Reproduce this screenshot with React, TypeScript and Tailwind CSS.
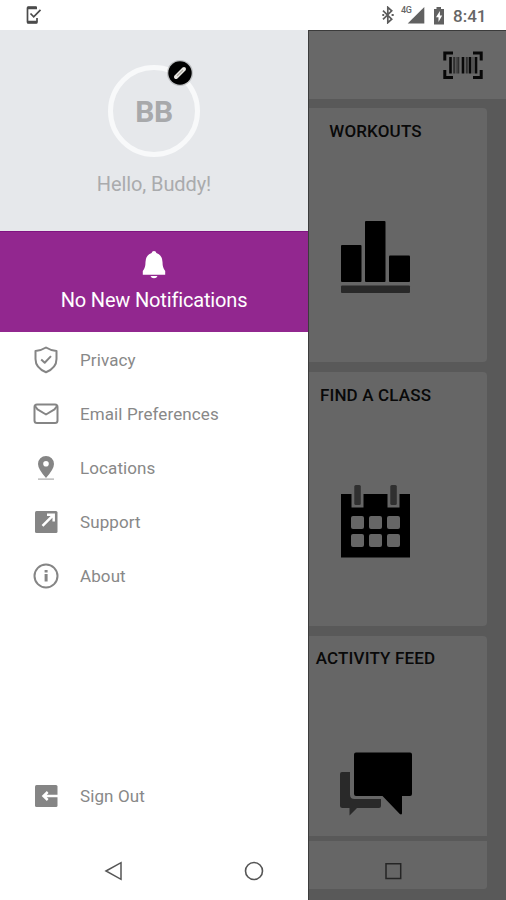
import type { ReactNode } from "react";

function StatusBar() {
  return (
    <header className="flex h-[30px] shrink-0 items-center bg-white text-[#666]">
      <svg className="ml-[25px]" width="18" height="20" viewBox="0 0 18 20" fill="none" stroke="#4b4b4b">
        <path d="M11.5 2H3.3Q2.5 2 2.5 3V17Q2.5 18 3.5 18H11Q12 18 12 17V13" strokeWidth="1.7" />
        <path d="M2.5 3H12M2.5 17H12" strokeWidth="2.5" />
        <path d="M5.5 8.5 8.7 11.8 15.5 4.8" strokeWidth="1.7" />
      </svg>
      <svg className="ml-auto" width="12" height="18" viewBox="0 0 12 18" fill="none" stroke="#5c5c5c" strokeWidth="1.7">
        <path d="M1 4.6 9.7 13.2 5.8 16.7V1.3L9.7 4.8 1 13.4" />
        <path d="M.3 9H2.2M9.6 9H11.7" strokeWidth="1.9" />
      </svg>
      <div className="ml-[7px] mt-px flex h-[17px] w-[24px] items-start">
        <span className="w-[12px] text-[9px] font-medium leading-[7px] tracking-[-0.3px]">4G</span>
        <svg className="-ml-[6px] shrink-0" width="18" height="17" viewBox="0 0 18 17">
          <path d="M.7 16.5 17.3 0V16.5Z" fill="#616161" />
        </svg>
      </div>
      <svg className="ml-[8px] mt-px" width="12" height="18" viewBox="0 0 12 18">
        <path d="M3.5 0H8V2H11V17.5H1V2H3.5Z" fill="#616161" />
        <path d="M6.9 4 3 10.3H5.5V15L9.2 8.6H6.9Z" fill="#fff" />
      </svg>
      <span className="ml-[8px] mr-[19px] mt-[2px] w-[34px] whitespace-nowrap text-[17px] font-medium leading-5">8:41</span>
    </header>
  );
}

function ShieldIcon() {
  return (
    <svg width="26" height="28" viewBox="0 0 26 28" fill="none" stroke="#858585" strokeWidth="2" strokeLinejoin="round">
      <path d="M13 1.5Q18 4.7 23.5 4.9V13Q23.5 22 13 26.2 2.5 22 2.5 13V4.9Q8 4.7 13 1.5Z" />
      <path d="M8.2 13.5 11.7 16.7 18 10.1" />
    </svg>
  );
}

function MailIcon() {
  return (
    <svg width="26" height="22" viewBox="0 0 26 22" fill="none" stroke="#858585" strokeWidth="2" strokeLinejoin="round">
      <rect x="1.5" y="1.5" width="23" height="18.5" rx="2.5" />
      <path d="M2 3 4.5 6.3 13 11.5 21.5 6.3 24 3" />
    </svg>
  );
}

function PinIcon() {
  return (
    <svg width="26" height="26" viewBox="0 0 26 26">
      <path d="M5 23.5H21V24.7H5Z" fill="#aaa" />
      <path fillRule="evenodd" d="M13 1A8 8 0 0 0 5 9Q5 14 13 23 21 14 21 9A8 8 0 0 0 13 1ZM13 6A2.8 2.8 0 1 1 13 11.6 2.8 2.8 0 0 1 13 6Z" fill="#858585" />
    </svg>
  );
}

function SupportIcon() {
  return (
    <svg width="26" height="24" viewBox="0 0 26 24">
      <rect x="2" y="1" width="22.5" height="22" rx="1.5" fill="#858585" />
      <path d="M9.5 15.8 20 5.3M14 4.7H20.7V11.5" fill="none" stroke="#fff" strokeWidth="2.5" />
    </svg>
  );
}

function InfoIcon() {
  return (
    <svg width="26" height="26" viewBox="0 0 26 26">
      <circle cx="13" cy="13" r="11.5" fill="none" stroke="#858585" strokeWidth="2" />
      <path d="M11.6 7.1H14.6V9.4H11.6ZM11.6 11H14.6V18.5H11.6Z" fill="#858585" />
    </svg>
  );
}

function SignOutIcon() {
  return (
    <svg width="26" height="24" viewBox="0 0 26 24">
      <rect x="2" y="1" width="22.5" height="22" rx="1.5" fill="#858585" />
      <path d="M25 12H11M14.7 8 10.5 12 14.7 16" fill="none" stroke="#fff" strokeWidth="2.5" />
    </svg>
  );
}

function MenuItem({ icon, label }: { icon: ReactNode; label: string }) {
  return (
    <li className="flex h-[54px] items-center pl-[33px]">
      <span className="mt-px flex w-[26px] justify-center">{icon}</span>
      <span className="ml-[21px] mt-[2px] whitespace-nowrap text-[17px] leading-6 tracking-[0.1px] text-[#888]">{label}</span>
    </li>
  );
}

function Drawer() {
  return (
    <aside className="z-10 flex w-[308px] shrink-0 flex-col bg-white">
      <section className="flex h-[201px] shrink-0 flex-col items-center bg-[#e6e8eb] pt-[35px]">
        <div className="relative flex size-[92px] items-center justify-center rounded-full border-[5px] border-[#f8f9fa]">
          <span className="mt-[2px] text-[30px] font-bold leading-9 tracking-[-0.5px] text-[#a8a9ab]">BB</span>
          <svg className="absolute right-px -top-[11px]" width="28" height="28" viewBox="0 0 28 28">
            <circle cx="14" cy="14" r="13" fill="#000" fillOpacity=".18" />
            <circle cx="14" cy="14" r="11.7" fill="#000" />
            <path d="M10 18 18 10" stroke="#e8e6e1" strokeWidth="4" strokeLinecap="round" />
            <path d="M11 17 17 11" stroke="#aaa89f" strokeWidth="1.2" />
          </svg>
        </div>
        <p className="mt-[13px] text-[20px] leading-7 tracking-[-0.1px] text-[#aaabad]">Hello, Buddy!</p>
      </section>
      <section className="flex h-[101px] shrink-0 flex-col items-center border-t border-[#801480] bg-[#92278f] pt-[18px] text-white">
        <svg width="24" height="30" viewBox="0 0 24 30" fill="#fff">
          <path d="M12 1Q14 1 14.4 3 20.3 5 20.5 12 20.5 18 23.2 21V24.8H.8V21Q3.5 18 3.5 12 3.7 5 9.6 3 10 1 12 1Z" />
          <path d="M8.5 26H15.5Q14.7 28.3 12 28.3T8.5 26Z" />
        </svg>
        <p className="mt-[6px] whitespace-nowrap text-[20px] leading-7 tracking-[-0.16px]">No New Notifications</p>
      </section>
      <ul>
        <MenuItem icon={<ShieldIcon />} label="Privacy" />
        <MenuItem icon={<MailIcon />} label="Email Preferences" />
        <MenuItem icon={<PinIcon />} label="Locations" />
        <MenuItem icon={<SupportIcon />} label="Support" />
        <MenuItem icon={<InfoIcon />} label="About" />
      </ul>
      <ul className="mb-[78px] mt-auto">
        <MenuItem icon={<SignOutIcon />} label="Sign Out" />
      </ul>
    </aside>
  );
}

function BarcodeIcon() {
  return (
    <svg width="40" height="29" viewBox="0 0 40 29" fill="none">
      <path d="M1.8 9.5V2H10M30 2H38.2V9.5M38.2 19V26.5H30M10 26.5H1.8V19" stroke="#080808" strokeWidth="3" />
      <path d="M7.5 6V22.5M20 6V22.5M27 6V22.5M33 6V22.5" stroke="#080808" strokeWidth="2.6" />
      <path d="M11.2 6V22.5M15.3 6V22.5M23.8 6V22.5" stroke="#303030" strokeWidth="2" />
      <path d="M13.5 6V22.5M30 6V22.5" stroke="#494949" strokeWidth="1.5" />
    </svg>
  );
}

function ChartIcon() {
  return (
    <svg width="72" height="75" viewBox="0 0 72 75">
      <rect x="1" y="26" width="20.5" height="37" rx="1" />
      <rect x="25" y="2" width="20.5" height="61" rx="1" />
      <rect x="49" y="36.5" width="21" height="26.5" rx="1" />
      <rect x="1" y="66.5" width="69" height="7.5" rx="1" fill="#292929" />
    </svg>
  );
}

function CalendarIcon() {
  return (
    <svg width="72" height="73" viewBox="0 0 72 73">
      <path d="M1 9H11.5V22.5H23.5V9H47.5V22.5H59.5V9H70V72.5H1Z" />
      <rect x="14.3" y="0" width="6.5" height="20" rx="1.5" fill="#303030" />
      <rect x="50.3" y="0" width="6.5" height="20" rx="1.5" fill="#303030" />
      <g fill="#666">
        <rect x="11" y="31" width="13" height="13" rx="2" />
        <rect x="29" y="31" width="13" height="13" rx="2" />
        <rect x="47" y="31" width="13" height="13" rx="2" />
        <rect x="11" y="49" width="13" height="13" rx="2" />
        <rect x="29" y="49" width="13" height="13" rx="2" />
        <rect x="47" y="49" width="13" height="13" rx="2" />
      </g>
    </svg>
  );
}

function ChatIcon() {
  return (
    <svg width="74" height="65" viewBox="0 0 74 65">
      <path d="M3 20H11V42.5Q11 47 15.5 47H42V54Q42 56 40 56H18L10.5 63.5V56H3.5Q1 56 1 53.5V22Q1 20 3 20Z" fill="#292929" />
      <path d="M17 .5H71Q73 .5 73 2.5V42Q73 44 71 44H63V61.5Q62.5 63 60.8 62L43.5 44H17Q15 44 15 42V2.5Q15 .5 17 .5Z" />
    </svg>
  );
}

function Tile({ title, children }: { title: string; children: ReactNode }) {
  return (
    <article className="flex h-[254px] w-[223px] shrink-0 flex-col items-center rounded-[4px] bg-[#666] pt-[13px]">
      <h2 className="whitespace-nowrap text-[17px] font-medium leading-5 tracking-[0.15px] text-[#090909]">{title}</h2>
      {children}
    </article>
  );
}

function Home() {
  return (
    <main className="flex min-w-0 flex-1 flex-col overflow-hidden border-l border-[#3c3c3c] bg-[#595959] shadow-[inset_0_1px_0_#3b3b3b]">
      <div className="mt-px flex h-[68px] shrink-0 items-center justify-end bg-[#686868] pr-[23px]">
        <BarcodeIcon />
      </div>
      <div className="flex min-h-0 flex-1 flex-col items-end gap-[10px] overflow-hidden pr-[19px] pt-[9px]">
        <Tile title="WORKOUTS">
          <div className="mt-[78px]"><ChartIcon /></div>
        </Tile>
        <Tile title="FIND A CLASS">
          <div className="mt-[80px]"><CalendarIcon /></div>
        </Tile>
        <article className="-mb-[5px] flex h-[200px] w-[223px] shrink-0 flex-col items-center rounded-t-[4px] bg-[#666] pt-[12px]">
          <h2 className="whitespace-nowrap text-[17px] font-medium leading-5 tracking-[0.15px] text-[#090909]">ACTIVITY FEED</h2>
          <div className="mt-[84px]"><ChatIcon /></div>
        </article>
        <div className="h-[48px] w-[223px] shrink-0 rounded-b-[3px] bg-[#666]" />
      </div>
    </main>
  );
}

function NavigationBar() {
  return (
    <nav className="absolute inset-x-0 bottom-0 z-20 flex h-[58px] items-center justify-between pl-[104px] pr-[103px]">
      <svg width="20" height="20" viewBox="0 0 20 20" fill="none" stroke="#555" strokeWidth="1.5">
        <path d="M2 10 17 1.7V18.3Z" />
      </svg>
      <svg width="20" height="20" viewBox="0 0 20 20" fill="none" stroke="#555" strokeWidth="1.6">
        <circle cx="10" cy="10" r="8.5" />
      </svg>
      <svg width="20" height="20" viewBox="0 0 20 20" fill="none" stroke="#252525" strokeWidth="1.5">
        <path d="M3 2.7H17.7V17.4H3Z" />
      </svg>
    </nav>
  );
}

export default function App() {
  return (
    <div className="relative flex h-[900px] w-[506px] flex-col overflow-hidden bg-white font-[Roboto,sans-serif]">
      <StatusBar />
      <div className="flex min-h-0 flex-1">
        <Drawer />
        <Home />
      </div>
      <NavigationBar />
    </div>
  );
}
